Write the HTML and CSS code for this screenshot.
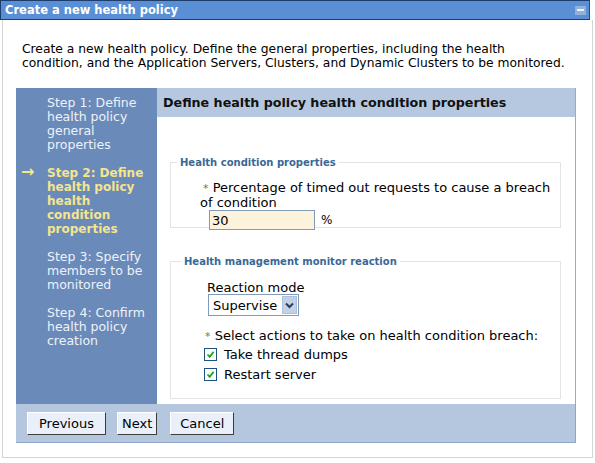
FILE: index.html
```html
<!DOCTYPE html>
<html>
  <head>
    <title>Create a new health policy</title>
    <link rel="stylesheet" href="styles.css">
  </head>
  <body>
    <div class="portlet">
      <div class="portlet-title">
        <span>Create a new health policy</span>
        <span class="minimize"><span class="dash"></span></span>
      </div>
      <div class="portlet-body">
        <p class="intro">Create a new health policy. Define the general properties, including the health<br>condition, and the Application Servers, Clusters, and Dynamic Clusters to be monitored.</p>

        <div class="wizard">
          <div class="wizard-main">
            <ul class="steps">
              <li class="step">Step 1: Define health policy general properties</li>
              <li class="step current"><span class="arrow">&rarr;</span>Step 2: Define health policy health condition properties</li>
              <li class="step">Step 3: Specify members to be monitored</li>
              <li class="step">Step 4: Confirm health policy creation</li>
            </ul>

            <div class="content">
              <h2 class="content-title">Define health policy health condition properties</h2>
              <div class="content-body">
                <fieldset class="group group-condition">
                  <legend>Health condition properties</legend>
                  <label class="field-label" for="percent"><span class="required">*</span> Percentage of timed out requests to cause a breach of condition</label>
                  <div class="field-row">
                    <input type="text" id="percent" class="text-input" value="30" />
                    <span class="unit">%</span>
                  </div>
                </fieldset>

                <fieldset class="group group-reaction">
                  <legend>Health management monitor reaction</legend>
                  <label class="field-label plain" for="mode">Reaction mode</label>
                  <div class="select-box">
                    <select id="mode" class="select">
                      <option>Supervise</option>
                      <option>Automatic</option>
                    </select>
                    <span class="select-arrow">
                      <svg width="9" height="7" viewBox="0 0 9 7"><path d="M1 1.5 L4.5 5 L8 1.5" fill="none" stroke="#2b3d5c" stroke-width="2"/></svg>
                    </span>
                  </div>
                  <div class="actions-label"><span class="required">*</span> Select actions to take on health condition breach:</div>
                  <label class="check">
                    <span class="check-box"><svg width="9" height="9" viewBox="0 0 9 9"><path d="M1.5 4.5 L3.7 6.8 L7.6 1.8" fill="none" stroke="#21a121" stroke-width="1.8"/></svg></span>
                    Take thread dumps
                  </label>
                  <label class="check">
                    <span class="check-box"><svg width="9" height="9" viewBox="0 0 9 9"><path d="M1.5 4.5 L3.7 6.8 L7.6 1.8" fill="none" stroke="#21a121" stroke-width="1.8"/></svg></span>
                    Restart server
                  </label>
                </fieldset>
              </div>
            </div>
          </div>

          <div class="button-bar">
            <button type="button" class="btn btn-prev">Previous</button>
            <button type="button" class="btn btn-next">Next</button>
            <button type="button" class="btn btn-cancel">Cancel</button>
          </div>
        </div>
      </div>
    </div>
  </body>
</html>
```

FILE: styles.css
```css
body {
  margin: 0;
  font-family: "DejaVu Sans", Verdana, sans-serif;
  background-color: #fff;
  color: #000;
}
.portlet {
  width: 593px;
}
.portlet-title {
  display: flex;
  justify-content: space-between;
  align-items: center;
  height: 20px;
  width: 590px;
  padding-left: 4px;
  box-sizing: border-box;
  background-color: #5b8fd5;
  border: 1px solid #1d3d6b;
  border-right-color: #2a4a78;
  color: #fff;
  font-weight: bold;
  font-size: 11.5px;
}
.minimize {
  display: flex;
  align-items: center;
  justify-content: center;
  width: 11px;
  height: 9px;
  margin-right: 3px;
  background-color: #8fb1dc;
}
.minimize .dash {
  width: 7px;
  height: 2px;
  background-color: #eef3fa;
}
.portlet-body {
  margin-left: 2px;
  height: 438px;
  border: 1px solid #d4d4d4;
  border-top: none;
  box-sizing: border-box;
}
.intro {
  margin: 0;
  padding: 22px 4px 0 19px;
  font-size: 12.3px;
  line-height: 14px;
}
.wizard {
  margin: 18px 0 0 13px;
  width: 560px;
}
.wizard-main {
  display: flex;
  height: 316px;
}
.steps {
  list-style: none;
  margin: 0;
  padding: 8px 7px 0 31px;
  width: 141px;
  box-sizing: border-box;
  background-color: #6a8aba;
  font-size: 12.5px;
  line-height: 14px;
  color: #eef2f8;
}
.step {
  position: relative;
  margin-bottom: 14px;
}
.step.current {
  color: #f5e58c;
  font-weight: bold;
  font-size: 12px;
}
.arrow {
  position: absolute;
  left: -26px;
  top: -1px;
  font-size: 16px;
  font-weight: bold;
}
.content {
  flex: 1;
  background-color: #fff;
  border-right: 1px solid #97abc9;
}
.content-title {
  margin: 0;
  height: 29px;
  padding-left: 6px;
  display: flex;
  align-items: center;
  background-color: #b6c8e0;
  font-size: 12.7px;
  color: #111;
}
.content-body {
  padding: 40px 14px 0 13px;
}
.group {
  margin: 0;
  border: 1px solid #e3e3e3;
  padding: 0 6px 0 29px;
}
.group legend {
  margin-left: -23px;
  padding: 0 3px;
  font-size: 10px;
  font-weight: bold;
  color: #3a6896;
}
.group-condition {
  height: 71px;
  box-sizing: border-box;
  padding-top: 13px;
}
.group-reaction {
  margin-top: 28px;
  height: 143px;
  box-sizing: border-box;
  padding-top: 14px;
  padding-left: 33px;
}
.field-label {
  display: block;
  font-size: 13px;
  line-height: 14px;
  text-indent: 3px;
}
.field-label.plain {
  text-indent: 0;
  margin-left: 3px;
}
.required {
  color: #8a7d00;
  font-size: 11px;
}
.field-row {
  display: flex;
  align-items: center;
  margin: 0 0 0 9px;
}
.text-input {
  width: 106px;
  height: 20px;
  box-sizing: border-box;
  border: 1px solid #7f9db9;
  background-color: #fdf3dc;
  font-family: "DejaVu Sans", Verdana, sans-serif;
  font-size: 13px;
  padding: 0 2px;
  outline: none;
}
.unit {
  margin-left: 6px;
  font-size: 12px;
}
.select-box {
  display: flex;
  align-items: center;
  width: fit-content;
  margin: -1px 0 0 4px;
  height: 22px;
  box-sizing: border-box;
  border: 1px solid #7f9db9;
  background-color: #fff;
}
.select {
  appearance: none;
  -webkit-appearance: none;
  border: none;
  background: transparent;
  font-family: "DejaVu Sans", Verdana, sans-serif;
  font-size: 13px;
  padding: 0 2px 0 4px;
  outline: none;
  color: #000;
}
.select-arrow {
  display: flex;
  align-items: center;
  justify-content: center;
  width: 15px;
  height: 18px;
  margin-right: 1px;
  background-color: #c3d1e6;
  border: 1px solid #b0c0da;
  box-sizing: border-box;
}
.actions-label {
  margin-top: 13px;
  font-size: 13px;
  line-height: 14px;
  padding-left: 1px;
}
.check {
  display: flex;
  align-items: center;
  font-size: 13px;
  height: 20px;
}
.check-box {
  display: flex;
  align-items: center;
  justify-content: center;
  width: 13px;
  height: 13px;
  box-sizing: border-box;
  border: 1px solid #1c5180;
  background-color: #fff;
  margin-right: 7px;
}
.button-bar {
  display: flex;
  align-items: center;
  gap: 11px;
  height: 39px;
  padding-left: 11px;
  box-sizing: border-box;
  background-color: #b5c7df;
  border-right: 1px solid #8fa5c6;
  border-bottom: 1px solid #8fa5c6;
}
.btn {
  height: 23px;
  padding: 0 11px;
  font-family: "DejaVu Sans", Verdana, sans-serif;
  font-size: 13px;
  color: #000;
  background-color: #e9f0fa;
  border: 1px solid;
  border-color: #fff #3c3c3c #3c3c3c #fff;
  cursor: pointer;
}
.btn-next {
  padding: 0 4px;
}
.btn-cancel {
  margin-left: 2px;
  padding: 0 9px;
}
```
